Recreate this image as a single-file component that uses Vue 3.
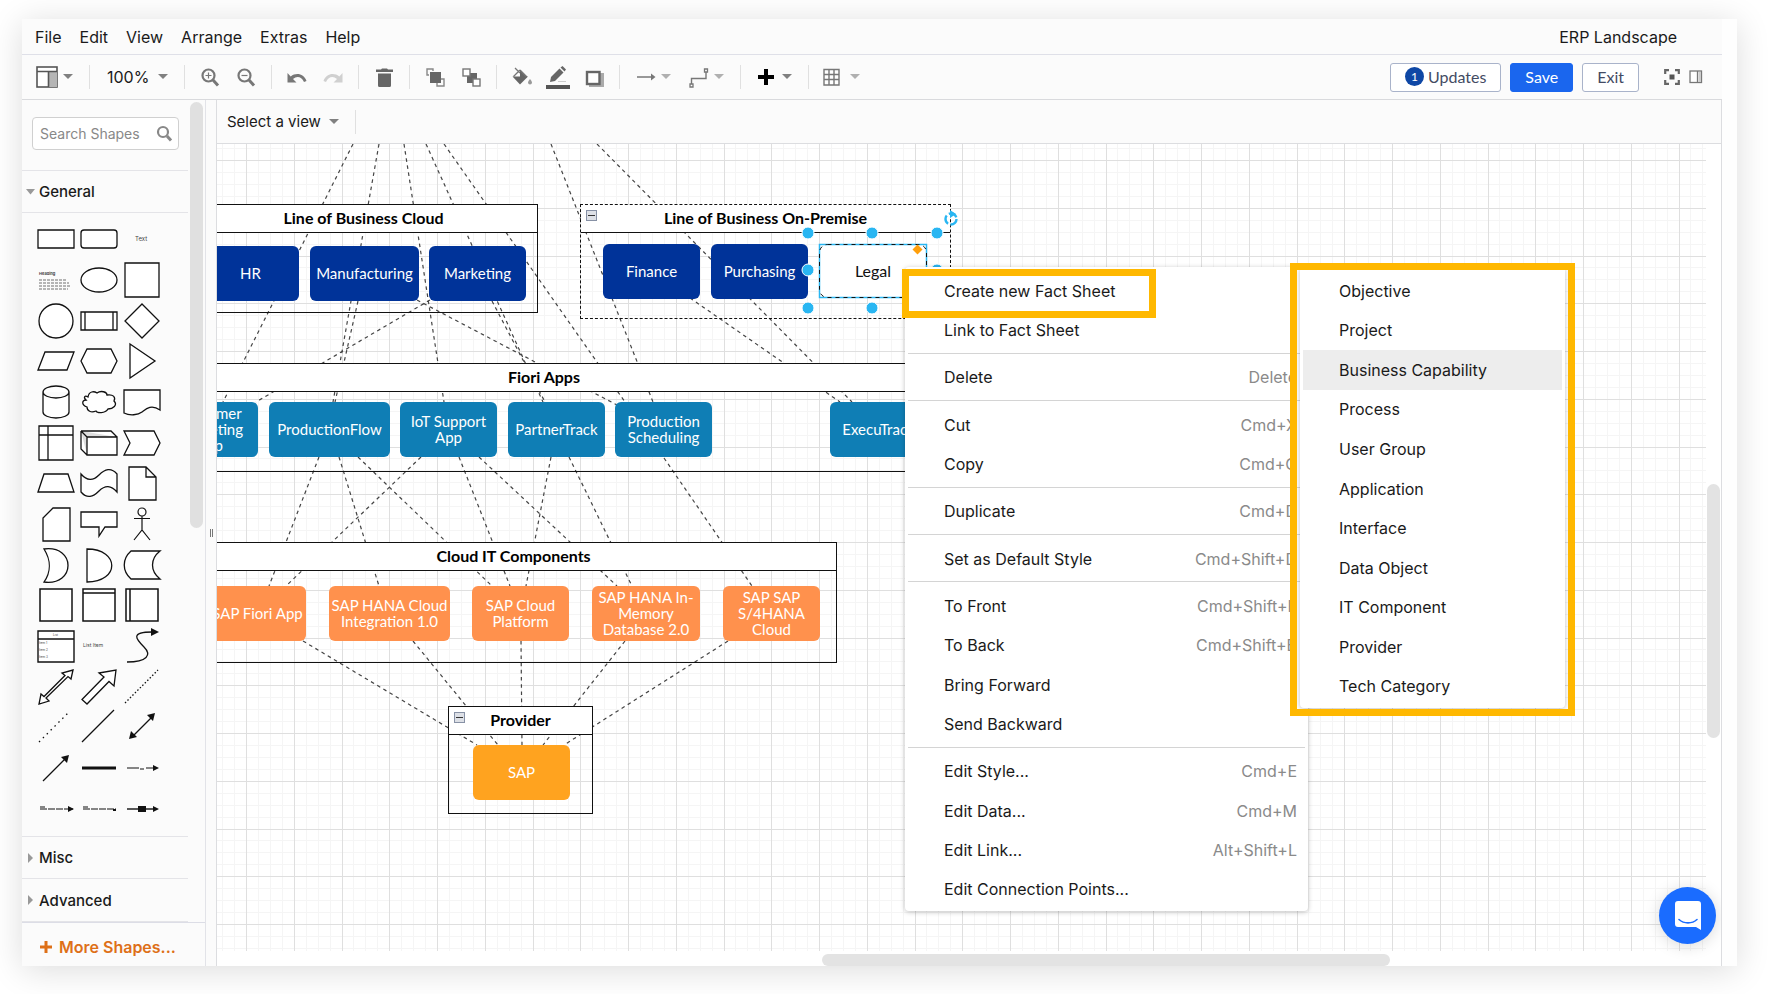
<template>
  <div class="page">
    <div class="window">
      <div class="frame">
        <header class="menubar">
          <nav class="menus">
            <button v-for="name in menus" :key="name" type="button" class="menu-btn">{{ name }}</button>
          </nav>
          <span class="doc-title">ERP Landscape</span>
        </header>

        <div class="toolbar">
          <div class="tools">
            <button type="button" class="tool drop" aria-label="View">
              <svg class="ico" viewBox="0 0 24 24">
                <rect x="2" y="2" width="20" height="20" fill="#fff" stroke="#555" stroke-width="1.6" />
                <rect x="14" y="7" width="8" height="15" fill="#b5b5b5" />
                <path d="M2 6.5h20M13.500 7v15" stroke="#555" stroke-width="1.6" fill="none" />
              </svg>
              <svg class="caret dark" viewBox="0 0 13 6"><path d="M0 0h10l-5 5z" /></svg>
            </button>
            <i class="sep"></i>
            <div class="zoom">
              <select v-model="zoom" class="plain-select zoom-select" aria-label="Zoom">
                <option>100%</option>
              </select>
              <svg class="caret dark" viewBox="0 0 13 6"><path d="M0 0h10l-5 5z" /></svg>
            </div>
            <i class="sep"></i>
            <button type="button" class="tool" aria-label="Zoom In">
              <svg class="ico" viewBox="0 0 24 24">
                <circle cx="10.500" cy="10.500" r="6" fill="none" stroke="#777" stroke-width="2.200" />
                <path d="M7.500 10.500h6M10.500 7.500v6" stroke="#777" stroke-width="1.2" />
                <path d="M15 15l5 5.500" stroke="#777" stroke-width="3" />
              </svg>
            </button>
            <button type="button" class="tool" aria-label="Zoom Out">
              <svg class="ico" viewBox="0 0 24 24">
                <circle cx="10.500" cy="10.500" r="6" fill="none" stroke="#777" stroke-width="2.200" />
                <path d="M7.500 10.500h6" stroke="#777" stroke-width="1.2" />
                <path d="M15 15l5 5.500" stroke="#777" stroke-width="3" />
              </svg>
            </button>
            <i class="sep"></i>
            <button type="button" class="tool" aria-label="Undo">
              <svg class="ico" viewBox="0 0 24 24">
                <path d="M2.500 8v9.500h9l-3.500-3.500c4-3.500 8.500-2.500 11 3l2.500-1c-2.500-7-10-9-15.800-4.500z" fill="#777" />
              </svg>
            </button>
            <button type="button" class="tool" aria-label="Redo">
              <svg class="ico" viewBox="0 0 24 24">
                <path d="M21.500 8v9.500h-9l3.500-3.500c-4-3.500-8.500-2.500-11 3l-2.500-1c2.500-7 10-9 15.800-4.500z" fill="#d0d0d0" />
              </svg>
            </button>
            <i class="sep"></i>
            <button type="button" class="tool" aria-label="Delete">
              <svg class="ico" viewBox="0 0 24 24">
                <path d="M4 4.500h5l1-1h5l1 1h5V7H4zM6 8.500h13v12a1.500 1.500 0 0 1-1.500 1.500h-10A1.500 1.500 0 0 1 6 20.500z" fill="#666" />
              </svg>
            </button>
            <i class="sep"></i>
            <button type="button" class="tool" aria-label="To Front">
              <svg class="ico" viewBox="0 0 24 24">
                <path d="M6 10H4V4h6v2M18 14h3v7h-7v-3" fill="none" stroke="#888" stroke-width="1.400" />
                <rect x="7" y="7" width="11" height="11" fill="#666" />
              </svg>
            </button>
            <button type="button" class="tool" aria-label="To Back">
              <svg class="ico" viewBox="0 0 24 24">
                <rect x="8" y="8" width="10" height="10" fill="#666" />
                <rect x="4" y="4" width="7" height="7" fill="#fff" stroke="#777" stroke-width="1.400" />
                <rect x="14" y="14" width="7" height="7" fill="#fff" stroke="#777" stroke-width="1.400" />
              </svg>
            </button>
            <i class="sep"></i>
            <button type="button" class="tool" aria-label="Fill Color">
              <svg class="ico" viewBox="0 0 24 24">
                <path d="M5 3l5 5M10 5l7 7M10 5l-6.500 6.500" stroke="#777" stroke-width="1.3" fill="none" />
                <path d="M2.500 11.500h15.500L10 19.500zM10 5.500v6h6z" fill="#666" />
                <path d="M20 14c1.500 2 2 3 2 3.500a2 2 0 0 1-4 0c0-.500.500-1.500 2-3.500z" fill="#999" />
              </svg>
            </button>
            <button type="button" class="tool" aria-label="Line Color">
              <svg class="ico" viewBox="0 0 24 24">
                <path d="M4 17l1-5 8.500-8.500 4 4L9 16z" fill="#666" />
                <path d="M14.500 2.500l2-1.500 3.500 3.500-1.500 2z" fill="#666" />
                <path d="M12 16.500h8" stroke="#ccc" />
                <rect x="0" y="20" width="24" height="4" fill="#555" />
              </svg>
            </button>
            <button type="button" class="tool" aria-label="Shadow">
              <svg class="ico" viewBox="0 0 24 24">
                <path d="M7 8h15v14H7z" fill="#aaa" />
                <rect x="5" y="7" width="12.500" height="12" fill="#fff" stroke="#666" stroke-width="2.400" />
              </svg>
            </button>
            <i class="sep"></i>
            <button type="button" class="tool drop" aria-label="Connection">
              <svg class="ico" viewBox="0 0 24 24">
                <path d="M4 12h15" stroke="#777" stroke-width="1.500" /><path d="M18 8.500l4.500 3.500-4.500 3.500z" fill="#777" />
              </svg>
              <svg class="caret light" viewBox="0 0 13 6"><path d="M0 0h10l-5 5z" /></svg>
            </button>
            <button type="button" class="tool drop" aria-label="Waypoints">
              <svg class="ico" viewBox="0 0 24 24">
                <path d="M5.500 19.500V13.500h14.500V7" stroke="#777" stroke-width="1.400" fill="none" />
                <path d="M4 19h3v3H4zM18.500 4h3v3h-3z" fill="#fff" stroke="#777" stroke-width="1.300" />
              </svg>
              <svg class="caret light" viewBox="0 0 13 6"><path d="M0 0h10l-5 5z" /></svg>
            </button>
            <i class="sep"></i>
            <button type="button" class="tool drop" aria-label="Insert">
              <svg class="ico" viewBox="0 0 24 24"><path d="M4 12h16M12 4v16" stroke="#000" stroke-width="4" /></svg>
              <svg class="caret dark" viewBox="0 0 13 6"><path d="M0 0h10l-5 5z" /></svg>
            </button>
            <i class="sep"></i>
            <button type="button" class="tool drop" aria-label="Table">
              <svg class="ico" viewBox="0 0 24 24">
                <path d="M2 4.500h15v15.500H2zM2 9.500h15M2 14.500h15M7 4.500v15.500M12 4.500v15.500" stroke="#777" stroke-width="1.400" fill="#fff" />
              </svg>
              <svg class="caret light" viewBox="0 0 13 6"><path d="M0 0h10l-5 5z" /></svg>
            </button>
          </div>

          <div class="actions">
            <button type="button" class="btn"><span class="badge">1</span>Updates</button>
            <button type="button" class="btn primary">Save</button>
            <button type="button" class="btn">Exit</button>
            <button type="button" class="tool fullscreen" aria-label="Fullscreen">
              <svg width="16" height="16" viewBox="0 0 16 16">
                <path d="M1.200 5V1.200H5M11 1.200h3.800V5M14.800 11v3.800H11M5 14.800H1.200V11" fill="none" stroke="#666" stroke-width="2.200" />
                <rect x="5.500" y="5.500" width="5" height="5" fill="#555" />
              </svg>
            </button>
            <button type="button" class="tool" aria-label="Format">
              <svg width="14" height="14" viewBox="0 0 14 14">
                <rect x="1" y="1" width="11.500" height="11.500" fill="#fff" stroke="#777" stroke-width="1.300" />
                <path d="M8.500 1v11.500" stroke="#777" stroke-width="1.300" /><path d="M9.500 2h2.500v10H9.500z" fill="#ccc" />
              </svg>
            </button>
          </div>
        </div>

        <div class="body">
          <aside class="sidebar">
            <div class="scroll">
              <div class="search">
                <input v-model="query" type="text" placeholder="Search Shapes" aria-label="Search Shapes" />
                <svg width="18" height="18" viewBox="0 0 18 18">
                  <circle cx="8" cy="7" r="5" fill="none" stroke="#888" stroke-width="2.200" />
                  <path d="M12 11l4 4.500" stroke="#888" stroke-width="3" />
                </svg>
              </div>
              <button type="button" class="section">
                <svg width="9" height="6" viewBox="0 0 9 6"><path d="M0 0h9L4.500 5.500z" fill="#999" /></svg>General
              </button>
              <div class="palette">
                <button v-for="(s, i) in shapes" :key="i" type="button" class="shape" :aria-label="'Shape ' + (i + 1)">
                  <svg width="40" height="38" viewBox="-20 -19 40 38">
                    <path v-if="s.g" :d="s.g" fill="#ddd" />
                    <path
                      v-if="s.d"
                      :d="s.d"
                      :fill="s.line ? 'none' : '#fff'"
                      stroke="#111"
                      :stroke-width="s.w || 1.3"
                      :stroke-dasharray="s.dash"
                    />
                    <path v-if="s.f" :d="s.f" fill="#111" />
                    <text v-for="t in s.t" :key="t[0] + t[2]" :x="t[1]" :y="t[2]" :font-size="t[3]" :font-weight="t[4]" fill="#444">{{ t[0] }}</text>
                  </svg>
                </button>
              </div>
              <button type="button" class="section line-top">
                <svg width="9" height="10" viewBox="0 0 9 10"><path d="M2 0v10l5-5z" fill="#999" /></svg>Misc
              </button>
              <button type="button" class="section">
                <svg width="9" height="10" viewBox="0 0 9 10"><path d="M2 0v10l5-5z" fill="#999" /></svg>Advanced
              </button>
              <div class="side-thumb"></div>
            </div>
            <button type="button" class="more">
              <svg width="12" height="12" viewBox="0 0 12 12"><path d="M0 6h12M6 0v12" stroke="#de7018" stroke-width="3" /></svg>
              More Shapes...
            </button>
          </aside>

          <div class="splitter"><span></span></div>

          <main class="main">
            <div class="viewbar">
              <select v-model="view" class="plain-select" aria-label="View">
                <option>Select a view</option>
              </select>
              <svg class="caret dark" viewBox="0 0 13 6"><path d="M0 0h10l-5 5z" /></svg>
              <i class="sep"></i>
            </div>

            <div class="canvas">
              <svg class="grid">
                <defs>
                  <pattern id="grid" x="29" y="16" width="191" height="191" patternUnits="userSpaceOnUse">
                    <path :d="minorGrid" class="minor" />
                    <path :d="majorGrid" class="major" />
                  </pattern>
                </defs>
                <rect width="100%" height="100%" fill="url(#grid)" />
              </svg>

              <div class="world">
                <svg class="edges" width="1300" height="966">
                  <line v-for="(e, i) in edges" :key="i" :x1="e[0]" :y1="e[1]" :x2="e[2]" :y2="e[3]" />
                </svg>

                <section
                  v-for="g in groups"
                  :key="g.title"
                  class="group"
                  :class="{ dashed: g.dashed }"
                  :style="box(g)"
                >
                  <h2>{{ g.title }}</h2>
                  <button v-if="g.fold" type="button" class="fold" aria-label="Collapse"></button>
                </section>

                <div v-for="n in nodes" :key="n.label" class="node" :class="n.kind" :style="box(n)">{{ n.label }}</div>

                <svg class="edges" width="1300" height="966">
                  <rect x="819.500" y="244.500" width="107" height="53" fill="none" stroke="#29b6f2" stroke-width="1.500" />
                  <rect x="819.500" y="244.500" width="107" height="53" rx="8" fill="none" stroke="#111" stroke-dasharray="4 4" />
                  <circle v-for="h in handles" :key="h.join()" :cx="h[0]" :cy="h[1]" r="6" fill="#29b6f2" stroke="#fff" />
                  <path d="M917.500 244.500l5 5-5 5-5-5z" fill="#ff9f0a" />
                  <circle cx="951" cy="219" r="5.500" fill="none" stroke="#29b6f2" stroke-width="2.400" stroke-dasharray="9 2.500" />
                  <path d="M950 210l6 4-6 4z" fill="#29b6f2" />
                </svg>

                <div class="context-menu">
                  <template v-for="(item, i) in contextItems" :key="i">
                    <hr v-if="item === '-'" />
                    <button v-else type="button" class="item">
                      <span>{{ item[0] }}</span>
                      <kbd v-if="item[1]">{{ item[1] }}</kbd>
                    </button>
                  </template>
                </div>

                <div class="submenu">
                  <button
                    v-for="type in factSheets"
                    :key="type"
                    type="button"
                    class="item"
                    :class="{ active: type === activeType }"
                    @mouseenter="activeType = type"
                  >
                    {{ type }}
                  </button>
                </div>

                <div class="mark mark-create"></div>
                <div class="mark mark-types"></div>
              </div>

              <div class="thumb-v"></div>
              <div class="thumb-h"></div>
              <button type="button" class="chat" aria-label="Chat">
                <svg width="26" height="30" viewBox="0 0 26 30">
                  <path d="M3 0h20a3 3 0 0 1 3 3v26l-5-3H3a3 3 0 0 1-3-3V3a3 3 0 0 1 3-3z" fill="#fff" />
                  <path d="M4 18.500c5 4.500 13 4.500 18 0" fill="none" stroke="#1a6cff" stroke-width="1.600" stroke-linecap="round" />
                </svg>
              </button>
            </div>
          </main>
        </div>
      </div>
    </div>
  </div>
</template>

<script setup>
import { ref } from 'vue';

const menus = ['File', 'Edit', 'View', 'Arrange', 'Extras', 'Help'];
const zoom = ref('100%');
const view = ref('Select a view');
const query = ref('');
const activeType = ref('Business Capability');

// d: outline, f: solid part, g: grey part, t: [text, x, y, size, weight]
const shapes = [
  { d: 'M-18-9h36v18h-36z' },
  { d: 'M-15-9h30a3 3 0 0 1 3 3v12a3 3 0 0 1-3 3h-30a3 3 0 0 1-3-3v-12a3 3 0 0 1 3-3z' },
  { t: [['Text', -7, 2, 6, 400]] },
  {
    d: 'M-17 0h27M-17 3h30M-17 6h31M-17 9h29',
    line: true,
    w: 0.6,
    dash: '3 1',
    t: [['Heading', -17, -5, 4, 700]]
  },
  { d: 'M-18 0a18 12 0 0 1 36 0a18 12 0 0 1-36 0z' },
  { d: 'M-17-17h34v34h-34z' },
  { d: 'M-17 0a17 17 0 0 1 34 0a17 17 0 0 1-34 0z' },
  { d: 'M-18-9h36v18h-36zM-14-9v18M14-9v18' },
  { d: 'M0-17l17 17-17 17-17-17z' },
  { d: 'M-18 9l7-18h29l-7 18z' },
  { d: 'M-18 0l6-12h24l6 12-6 12h-24z' },
  { d: 'M-12-17l25 17-25 17z' },
  { d: 'M-13-10a13 6 0 0 1 26 0v20a13 6 0 0 1-26 0zM-13-10a13 6 0 0 0 26 0' },
  { d: 'M-11-5C-10-11-5-11-2-9C2-12 8-10 8-7C14-8 17-5 15-1C19 3 14 7 9 7C6 12-2 11-3 9C-8 11-12 9-12 5C-18 3-17-2-13-2C-16-5-14-7-11-5z' },
  { d: 'M-18-12h36v20c-9-6-14-1-18 2s-12 4-18 1z' },
  { d: 'M-17-17h34v34h-34zM-17-8h34M-8-17v34' },
  { g: 'M-18-12h30l6 6h-30v18l-6-6z', d: 'M-12-6h30v18h-30zM-18-12h30l6 6M-18-12l6 6M-18-12v18l6 6' },
  { d: 'M-18-12h30l6 12-6 12h-30l6-12z' },
  { d: 'M-18 9l6-18h24l6 18z' },
  { d: 'M-18-9c6 7 12 7 18 1s12-8 18-1v18c-6-7-12-7-18-1s-12 8-18 1z' },
  { d: 'M-13-16h17l10 10v23h-27zM4-16v10h10' },
  { d: 'M-3-16h17v33h-27v-23z' },
  { d: 'M-18-12h36v15h-12l-6 9v-9h-18z' },
  { d: 'M-4-12a4 4 0 0 1 8 0a4 4 0 0 1-8 0zM0-8V6M-8-5.500h16M-8 16L0 6l8 10', w: 1.2 },
  { d: 'M-12-16c32-4 32 37 0 33c7-10 7-22 0-33z' },
  { d: 'M-12-16c33 0 33 33 0 33z' },
  { d: 'M-11-14h29c-10 8-10 20 0 28h-29c-9-8-9-20 0-28z' },
  { d: 'M-16-16h32v32h-32z', w: 1.5 },
  { g: 'M-16-16h32v4h-32z', d: 'M-16-16h32v32h-32zM-16-12h32', w: 1.5 },
  { g: 'M-16-16h4v32h-4z', d: 'M-16-16h32v32h-32zM-12-16v32', w: 1.5 },
  {
    d: 'M-18-15h36v31h-36zM-18-7h36',
    w: 1.4,
    t: [['List', -3, -10, 3, 400], ['Item 1', -17, -2, 3, 400], ['Item 2', -17, 5, 3, 400], ['Item 3', -17, 12, 3, 400]]
  },
  { t: [['List Item', -16, 1, 5, 400]] },
  { d: 'M-15 16C5 16 10 9 2 1S-12-14 10-14', f: 'M9-18l8 4-8 4z', line: true },
  { d: 'M17-17l-2 9-3-2.500L-10 11l3 3-10 3 2-10 3 2.500L9-11.500 6-14z' },
  { d: 'M17-17l-2 16-5-4.500L-12 17l-5-4.500L5-10l-5-4z' },
  { d: 'M-17 16L16-17', line: true, dash: '1.5 2' },
  { d: 'M-17 15L14-16', line: true, dash: '1.5 4' },
  { d: 'M-17 15L15-17', line: true },
  { d: 'M-10 10L11-11', f: 'M13-14l-2 8-6-6zM-13 12l2-8 6 6z', line: true },
  { d: 'M-13 13L10-10', f: 'M13-13l-2 8-6-6z', line: true },
  { d: 'M-17 0h34', line: true, w: 3 },
  { d: 'M-15 0h12M-2 1h4M4 0h8', f: 'M11-3l6 3-6 3z', line: true, w: 1.2 },
  { d: 'M-16 0h33M-16-2h5', f: 'M12-3l6 3-6 3z', line: true, w: 1.2, dash: '7 1' },
  { d: 'M-16 0h33M-16-2h5', f: 'M14 0h3v2h-3z', line: true, w: 1.2, dash: '7 1' },
  { d: 'M-15 0h28', f: 'M11-3l6 3-6 3zM-4-3h8v6h-8z', line: true, w: 1.4 }
];

// 四个主格组成一个重复图块
const tileLines = (count) =>
  Array.from({ length: count }, (_, i) => {
    const p = Math.round((i * 191) / count) + 0.5;
    return `M${p} 0v191M0 ${p}h191`;
  }).join('');
const minorGrid = tileLines(16);
const majorGrid = tileLines(4);

const box = (b) => ({ left: b.x + 'px', top: b.y + 'px', width: b.w + 'px', height: b.h + 'px' });

const groups = [
  { title: 'Line of Business Cloud', x: 189, y: 204, w: 349, h: 109 },
  { title: 'Line of Business On-Premise', x: 580, y: 204, w: 371, h: 115, dashed: true, fold: true },
  { title: 'Fiori Apps', x: 100, y: 363, w: 888, h: 109 },
  { title: 'Cloud IT Components', x: 190, y: 542, w: 647, h: 121 },
  { title: 'Provider', x: 448, y: 706, w: 145, h: 108, fold: true }
];

const nodes = [
  { label: 'HR', kind: 'navy', x: 202, y: 246, w: 97, h: 55 },
  { label: 'Manufacturing', kind: 'navy', x: 310, y: 246, w: 109, h: 55 },
  { label: 'Marketing', kind: 'navy', x: 429, y: 246, w: 97, h: 55 },
  { label: 'Finance', kind: 'navy', x: 603, y: 244, w: 97, h: 55 },
  { label: 'Purchasing', kind: 'navy', x: 711, y: 244, w: 97, h: 55 },
  { label: 'Legal', kind: 'blank', x: 819, y: 244, w: 108, h: 54 },
  { label: 'Customer\nMarketing\nApp', kind: 'teal', x: 161, y: 402, w: 97, h: 55 },
  { label: 'ProductionFlow', kind: 'teal', x: 269, y: 402, w: 121, h: 55 },
  { label: 'IoT Support\nApp', kind: 'teal', x: 400, y: 402, w: 97, h: 55 },
  { label: 'PartnerTrack', kind: 'teal', x: 508, y: 402, w: 97, h: 55 },
  { label: 'Production\nScheduling', kind: 'teal', x: 615, y: 402, w: 97, h: 55 },
  { label: 'ExecuTrack', kind: 'teal', x: 830, y: 402, w: 97, h: 55 },
  { label: 'SAP Fiori App', kind: 'orange', x: 209, y: 586, w: 97, h: 55 },
  { label: 'SAP HANA Cloud\nIntegration 1.0', kind: 'orange', x: 329, y: 586, w: 121, h: 55 },
  { label: 'SAP Cloud\nPlatform', kind: 'orange', x: 472, y: 586, w: 97, h: 55 },
  { label: 'SAP HANA In-\nMemory\nDatabase 2.0', kind: 'orange', x: 592, y: 586, w: 108, h: 55 },
  { label: 'SAP SAP\nS/4HANA\nCloud', kind: 'orange', x: 723, y: 586, w: 97, h: 55 },
  { label: 'SAP', kind: 'amber', x: 473, y: 745, w: 97, h: 55 }
];

const edges = [
  [353, 144, 223, 402],
  [379, 144, 333, 402],
  [404, 144, 444, 402],
  [426, 144, 543, 402],
  [444, 144, 625, 402],
  [551, 144, 653, 402],
  [597, 144, 852, 402],
  [492, 301, 545, 402],
  [690, 298, 840, 402],
  [417, 300, 617, 405],
  [430, 300, 256, 402],
  [358, 301, 335, 402],
  [319, 457, 269, 586],
  [339, 457, 379, 586],
  [358, 457, 492, 586],
  [421, 457, 286, 586],
  [459, 457, 510, 586],
  [479, 457, 617, 586],
  [551, 457, 526, 586],
  [569, 457, 632, 586],
  [664, 458, 752, 586],
  [303, 641, 477, 745],
  [413, 641, 498, 745],
  [521, 641, 522, 745],
  [625, 641, 543, 745],
  [728, 641, 564, 745]
];

const handles = [
  [808, 233], [872, 233], [937, 233],
  [808, 270], [937, 270],
  [808, 308], [872, 308]
];

const contextItems = [
  ['Create new Fact Sheet'],
  ['Link to Fact Sheet'],
  '-',
  ['Delete', 'Delete'],
  '-',
  ['Cut', 'Cmd+X'],
  ['Copy', 'Cmd+C'],
  '-',
  ['Duplicate', 'Cmd+D'],
  '-',
  ['Set as Default Style', 'Cmd+Shift+D'],
  '-',
  ['To Front', 'Cmd+Shift+F'],
  ['To Back', 'Cmd+Shift+B'],
  ['Bring Forward'],
  ['Send Backward'],
  '-',
  ['Edit Style...', 'Cmd+E'],
  ['Edit Data...', 'Cmd+M'],
  ['Edit Link...', 'Alt+Shift+L'],
  ['Edit Connection Points...']
];

const factSheets = [
  'Objective',
  'Project',
  'Business Capability',
  'Process',
  'User Group',
  'Application',
  'Interface',
  'Data Object',
  'IT Component',
  'Provider',
  'Tech Category'
];
</script>

<style>
body {
  margin: 0;
  background: #fff;
}
</style>

<style scoped>
.page {
  box-sizing: border-box;
  height: 100vh;
  min-height: 900px;
  padding: 19px 35px 28px 22px;
  overflow: hidden;
  font-family: Inter, "Liberation Sans", sans-serif;
  font-size: 15px;
  color: #1a1a1a;
}

button,
input,
select,
kbd {
  font: inherit;
  color: inherit;
}

button {
  padding: 0;
  border: none;
  background: none;
  cursor: pointer;
}

.window {
  height: 100%;
  padding-right: 15px;
  box-sizing: border-box;
  background: #fefefe;
  box-shadow: 0 4px 32px rgba(0, 0, 0, 0.14);
}

.frame {
  display: flex;
  flex-direction: column;
  height: 100%;
  background: #fbfbfb;
}

/* 顶部菜单 */
.menubar {
  display: flex;
  justify-content: space-between;
  align-items: center;
  height: 35px;
  padding: 0 45px 0 13px;
  border-bottom: 1px solid #dfe0e8;
  font-size: 16px;
}

.menus {
  display: flex;
  gap: 18px;
}

/* 工具栏 */
.toolbar {
  display: flex;
  justify-content: space-between;
  align-items: center;
  height: 44px;
  padding: 0 19px 0 13px;
  border-bottom: 1px solid #d9dadd;
}

.tools,
.actions,
.zoom,
.viewbar {
  display: flex;
  align-items: center;
}

.tool {
  display: flex;
  align-items: center;
}

.tool + .tool {
  margin-left: 12px;
}

.drop {
  gap: 4px;
}

.ico {
  width: 24px;
  height: 24px;
}

.caret {
  width: 13px;
  height: 6px;
}

.caret.dark {
  fill: #808080;
}

.caret.light {
  fill: #b0b0b0;
}

.sep {
  width: 1px;
  height: 24px;
  margin: 0 13px;
  background: #e0e0e0;
}

.zoom {
  gap: 8px;
  padding-left: 4px;
}

.plain-select {
  appearance: none;
  padding: 0;
  border: none;
  background: none;
}

.zoom-select {
  width: 43px;
  font-size: 16px;
}

.actions {
  gap: 9px;
}

.btn {
  display: flex;
  align-items: center;
  gap: 4px;
  height: 29px;
  padding: 0 14px 1px;
  border: 1px solid #a9b3ca;
  border-radius: 3px;
  background: #fff;
  color: #434b63;
  font-family: Lato, sans-serif;
  font-size: 16px;
}

.btn.primary {
  border-color: #1a66ee;
  background: #1a66ee;
  color: #fff;
}

.badge {
  width: 19px;
  height: 19px;
  border-radius: 50%;
  background: #0e47a5;
  color: #fff;
  font-size: 12px;
  line-height: 19px;
  text-align: center;
}

.fullscreen {
  margin-left: 16px;
}

.actions .tool + .tool {
  margin-left: 0;
}

/* 侧栏 */
.body {
  display: flex;
  flex: 1;
  min-height: 0;
}

.sidebar {
  display: flex;
  flex-direction: column;
  width: 183px;
  border-right: 1px solid #e2e3e8;
}

.scroll {
  position: relative;
  display: flex;
  flex: 1;
  flex-direction: column;
  padding-right: 17px;
}

.search {
  display: flex;
  align-items: center;
  height: 31px;
  margin: 17px 9px 20px 10px;
  padding: 0 5px 0 7px;
  border: 1px solid #d0d0d0;
  border-radius: 4px;
  background: #fff;
}

.search input {
  flex: 1;
  width: 0;
  padding: 0;
  border: none;
  outline: none;
  background: none;
  font-size: 14px;
}

.search input::placeholder {
  color: #888;
  opacity: 1;
}

.section {
  display: flex;
  align-items: center;
  gap: 4px;
  height: 43px;
  padding-left: 4px;
  border-bottom: 1px solid #e4e4e8;
  font-weight: 500;
}

.section:first-of-type,
.line-top {
  border-top: 1px solid #e4e4e8;
}

.palette {
  display: grid;
  flex: 1;
  grid-template-columns: repeat(3, 43px);
  grid-auto-rows: 1fr;
  padding: 6px 0 7px 12px;
}

.shape {
  display: flex;
  align-items: center;
  justify-content: center;
  min-height: 0;
}

.side-thumb {
  position: absolute;
  top: 2px;
  right: 2px;
  width: 13px;
  height: 426px;
  border-radius: 7px;
  background: #e0e0e0;
}

.more {
  display: flex;
  align-items: center;
  gap: 7px;
  height: 44px;
  padding: 4px 0 0 18px;
  border-top: 1px solid #dcdde6;
  color: #de7018;
  font-size: 16px;
  font-weight: 600;
}

.splitter {
  display: flex;
  align-items: center;
  justify-content: center;
  width: 10px;
}

.splitter span {
  width: 1px;
  height: 8px;
  border: solid #777;
  border-width: 0 1px;
}

/* 画布 */
.main {
  display: flex;
  flex: 1;
  flex-direction: column;
  min-width: 0;
  border: solid #dcdde0;
  border-width: 0 1px;
}

.viewbar {
  height: 43px;
  padding-left: 10px;
  border-bottom: 1px solid #dcdde0;
}

.viewbar .caret {
  margin-left: 8px;
}

.canvas {
  position: relative;
  flex: 1;
  overflow: hidden;
  background: #fff;
}

.grid {
  position: absolute;
  top: 0;
  left: 0;
  width: calc(100% - 15px);
  height: calc(100% - 15px);
}

.minor {
  stroke: #f5f5f5;
}

.major {
  stroke: #dfdfdf;
}

.world {
  position: absolute;
  top: -144px;
  left: -217px;
}

.edges {
  position: absolute;
  top: 0;
  left: 0;
}

.edges line {
  stroke: #444;
  stroke-width: 1.2;
  stroke-dasharray: 3.6 3.6;
}

.group {
  position: absolute;
  box-sizing: border-box;
  border: 1px solid #111;
}

.group.dashed {
  border-style: dashed;
}

.group h2 {
  height: 27px;
  margin: 0;
  border-bottom: 1px solid #111;
  background: #fff;
  color: #000;
  font-family: Lato, sans-serif;
  font-size: 16px;
  font-weight: 700;
  line-height: 25px;
  text-align: center;
}

.fold {
  position: absolute;
  top: 5px;
  left: 5px;
  width: 11px;
  height: 11px;
  border: 1px solid #8791a5;
  background: linear-gradient(#333, #333) center / 7px 1px no-repeat, #dde0e6;
}

.node {
  position: absolute;
  display: flex;
  align-items: center;
  justify-content: center;
  box-sizing: border-box;
  padding-bottom: 1px;
  border-radius: 6px;
  color: #fff;
  font-family: Lato, sans-serif;
  font-size: 15px;
  line-height: 16px;
  text-align: center;
  white-space: pre;
}

.navy {
  background: #003399;
}

.teal {
  background: #0f7eb5;
}

.orange {
  background: #ff914d;
}

.amber {
  background: #ffa31f;
}

.blank {
  background: #fff;
  color: #111;
  font-size: 16px;
}

.context-menu,
.submenu {
  position: absolute;
  display: flex;
  flex-direction: column;
  box-sizing: border-box;
  padding: 4px 3px 2px;
  border-radius: 4px;
  background: #fff;
  box-shadow: 0 1px 5px rgba(0, 0, 0, 0.25);
  font-size: 16px;
}

.context-menu {
  top: 267px;
  left: 905px;
  width: 403px;
  height: 644px;
}

.submenu {
  top: 267px;
  left: 1300px;
  width: 265px;
  height: 441px;
}

.context-menu hr {
  width: 100%;
  height: 1px;
  margin: 3px 0 4px;
  border: none;
  background: #d4d4d4;
}

.item {
  display: flex;
  flex: 1;
  align-items: center;
  justify-content: space-between;
  padding: 0 8px 0 36px;
  text-align: left;
}

.item kbd {
  color: #8a8a8a;
}

.item.active {
  background: #ededed;
}

.mark {
  position: absolute;
  box-sizing: border-box;
  border: 7px solid #ffb800;
  pointer-events: none;
}

.mark-create {
  top: 269px;
  left: 902px;
  width: 254px;
  height: 49px;
}

.mark-types {
  top: 263px;
  left: 1290px;
  width: 285px;
  height: 453px;
}

.thumb-v {
  position: absolute;
  top: 340px;
  right: 1px;
  width: 13px;
  height: 254px;
  border-radius: 7px;
  background: #e3e3e3;
}

.thumb-h {
  position: absolute;
  bottom: 0;
  left: 605px;
  width: 568px;
  height: 12px;
  border-radius: 6px;
  background: #e3e3e3;
}

.chat {
  position: absolute;
  right: 5px;
  bottom: 22px;
  display: flex;
  align-items: center;
  justify-content: center;
  width: 57px;
  height: 57px;
  border-radius: 50%;
  background: #1a6cff;
  box-shadow: 0 2px 16px rgba(0, 0, 0, 0.15);
}
</style>
